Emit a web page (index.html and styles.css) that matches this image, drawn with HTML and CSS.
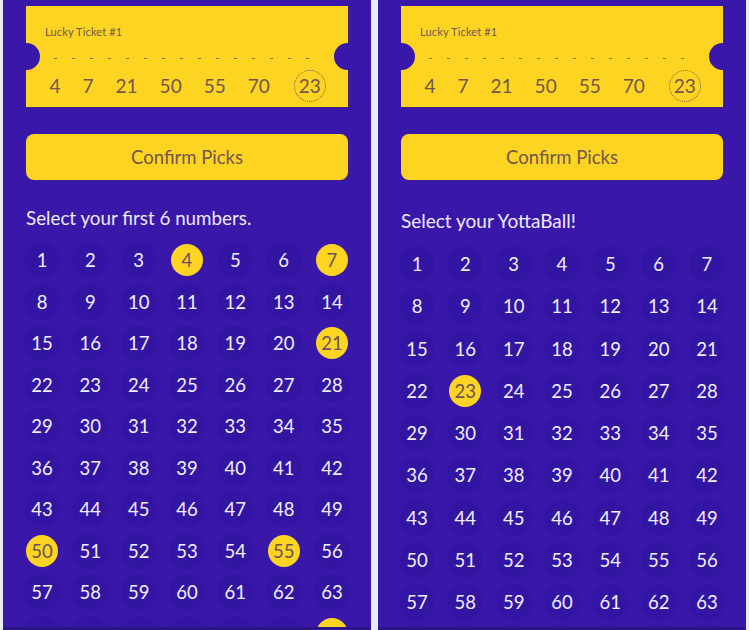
FILE: index.html
```html
<!DOCTYPE html>
<html>
<head>
<meta charset="utf-8">
<link rel="stylesheet" href="styles.css">
</head>
<body>
<div class="stage">
  <section class="panel panel-first">
    <div class="screen">
      <div class="ticket">
        <div class="ticket-label">Lucky Ticket #1</div>
        <div class="ticket-rule"></div>
        <div class="ticket-nums">
          <span>4</span><span>7</span><span>21</span><span>50</span><span>55</span><span>70</span><span class="yotta">23</span>
        </div>
      </div>
      <button class="confirm">Confirm Picks</button>
      <h2 class="prompt">Select your first 6 numbers.</h2>
      <div class="grid" id="grid1"></div>
    </div>
    <div class="bottom-edge"></div>
  </section>
  <section class="panel panel-second">
    <div class="screen">
      <div class="ticket">
        <div class="ticket-label">Lucky Ticket #1</div>
        <div class="ticket-rule"></div>
        <div class="ticket-nums">
          <span>4</span><span>7</span><span>21</span><span>50</span><span>55</span><span>70</span><span class="yotta">23</span>
        </div>
      </div>
      <button class="confirm">Confirm Picks</button>
      <h2 class="prompt">Select your YottaBall!</h2>
      <div class="grid" id="grid2"></div>
    </div>
    <div class="bottom-edge"></div>
  </section>
</div>
<script>
  function fill(id, count, picked) {
    var g = document.getElementById(id);
    for (var i = 1; i <= count; i++) {
      var d = document.createElement('div');
      d.className = 'ball' + (picked.indexOf(i) >= 0 ? ' picked' : '');
      d.textContent = i;
      g.appendChild(d);
    }
  }
  fill('grid1', 70, [4, 7, 21, 50, 55, 70]);
  fill('grid2', 70, [23]);
</script>
</body>
</html>
```

FILE: styles.css
```css
* { box-sizing: border-box; }

html, body {
  margin: 0;
  padding: 0;
  background: #ecebfb;
  font-family: "Lato", "Noto Sans", sans-serif;
}

.stage {
  display: flex;
  gap: 7px;
  padding-left: 3px;
  height: 630px;
  overflow: hidden;
}

.panel {
  width: 368px;
  height: 630px;
  background: #3817a9;
  display: flex;
  flex-direction: column;
}

.screen {
  flex: 1;
  overflow: hidden;
  padding: 6px 23px 0 23px;
  display: flex;
  flex-direction: column;
}

.bottom-edge {
  height: 3px;
  background: #2b1586;
}

.ticket {
  position: relative;
  height: 101px;
  background: #fdd421;
  box-shadow: 1px 1px 0 rgba(70, 50, 60, 0.45);
  color: #735650;
  flex: none;
}

.ticket::before,
.ticket::after {
  content: "";
  position: absolute;
  top: 37px;
  width: 27px;
  height: 27px;
  border-radius: 50%;
  background: #3817a9;
}
.ticket::before { left: -13px; }
.ticket::after { right: -13px; }

.ticket-label {
  font-size: 11px;
  line-height: 12px;
  padding: 20px 0 0 19px;
  letter-spacing: 0.15px;
}

.ticket-rule {
  margin: 20px 26px 0 28px;
  height: 1px;
  background: repeating-linear-gradient(90deg, #8a6c4a 0 3px, transparent 3px 18px);
}

.ticket-nums {
  display: flex;
  align-items: center;
  gap: 22px;
  padding-left: 23.5px;
  margin-top: 11px;
  font-size: 19px;
  line-height: 32px;
}

.ticket-nums .yotta {
  width: 32px;
  height: 32px;
  border: 1px dotted #735650;
  border-radius: 50%;
  text-align: center;
  line-height: 30px;
  margin-left: 2px;
}

.confirm {
  flex: none;
  margin-top: 27px;
  height: 46px;
  width: 100%;
  border: none;
  border-radius: 8px;
  background: #fdd421;
  color: #735650;
  font-family: inherit;
  font-size: 18.5px;
  box-shadow: 1px 1px 0 rgba(70, 50, 60, 0.35);
  padding: 0;
}

.prompt {
  margin: 27px 0 0 0;
  font-weight: normal;
  font-size: 18.8px;
  line-height: 22px;
  color: #eeeaff;
}

.grid {
  display: grid;
  grid-template-columns: repeat(7, 32px);
  justify-content: space-between;
  row-gap: 9.5px;
  margin-top: 15px;
}

.panel-second .prompt { margin-top: 30px; font-size: 19px; }
.panel-second .grid { row-gap: 10.25px; margin-top: 16px; }

.ball {
  width: 32px;
  height: 32px;
  border-radius: 50%;
  background: #3315a3;
  color: #f2f0ff;
  font-size: 18.5px;
  line-height: 32px;
  text-align: center;
  box-shadow: 0 0 2px 1px rgba(45, 18, 155, 0.5);
}

.ball.picked {
  background: #fdd421;
  color: #6a5260;
  box-shadow: none;
}
```
